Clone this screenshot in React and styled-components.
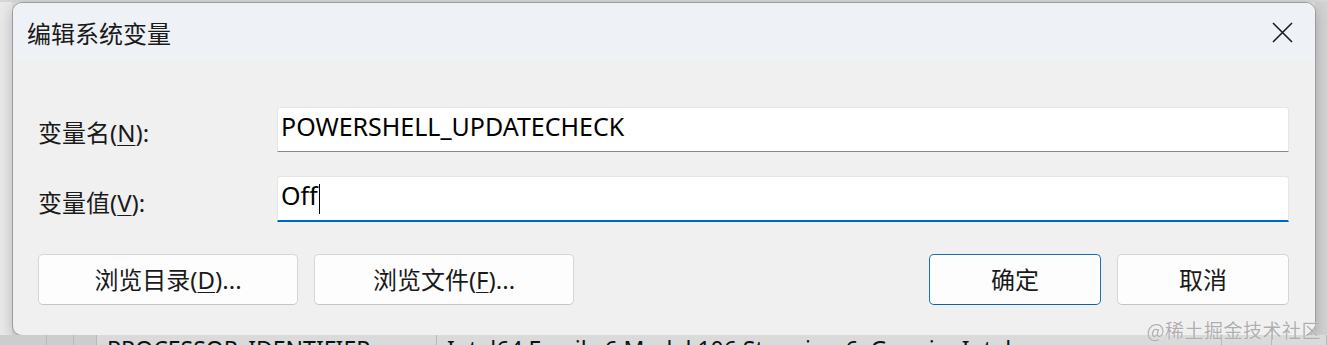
import styled, { createGlobalStyle, css } from 'styled-components';

const GlobalStyle = createGlobalStyle`
  html, body {
    margin: 0;
    padding: 0;
    background: #dcdcdc;
  }
  body {
    font-family: "Noto Sans", "Noto Sans CJK SC", sans-serif;
    color: #1a1a1a;
  }
`;

const Screen = styled.div`
  position: relative;
  width: 1327px;
  height: 345px;
  overflow: hidden;
  display: flex;
  flex-direction: column;
  background:
    linear-gradient(to right, #e9e9e9 0, #e9e9e9 12px, transparent 12px),
    linear-gradient(to left, #d2d2d2 0, #d2d2d2 12px, transparent 12px),
    #dedede;
`;

const TopStrip = styled.div`
  height: 2px;
  flex: none;
  background: #d6d6d6;
`;

const Middle = styled.div`
  flex: none;
  padding-left: 12px;
  display: flex;
`;

const Dialog = styled.section`
  width: 1304px;
  height: 334px;
  box-sizing: border-box;
  border: 1px solid #9c9c9c;
  border-radius: 10px;
  overflow: hidden;
  background: #f0f0f0;
  box-shadow: 0 4px 14px rgba(0, 0, 0, 0.22);
  display: flex;
  flex-direction: column;
`;

const TitleBar = styled.header`
  height: 58px;
  flex: none;
  display: flex;
  align-items: center;
  justify-content: space-between;
  padding: 0 22px 0 14px;
  background: linear-gradient(to bottom, #eef2f7, #eef1f5);
`;

const Title = styled.h1`
  margin: 0;
  font-size: 24px;
  font-weight: 400;
  color: #1a1a1a;
`;

const CloseButton = styled.button`
  border: 0;
  background: transparent;
  padding: 0;
  width: 22px;
  height: 22px;
  display: flex;
  align-items: center;
  justify-content: center;
  color: #1b1b1b;
`;

const Body = styled.div`
  flex: 1;
  padding: 46px 26px 0 25px;
  display: flex;
  flex-direction: column;
`;

const Fields = styled.div`
  display: grid;
  grid-template-columns: 239px 1fr;
  row-gap: 24px;
  align-items: center;
`;

const Label = styled.label`
  font-size: 24px;
  color: #1a1a1a;
  padding-top: 4px;

  u {
    text-decoration-thickness: 1px;
    text-underline-offset: 3px;
  }
`;

const TextBox = styled.div(
  ({ $focused }) => css`
    height: 45px;
    box-sizing: border-box;
    background: #ffffff;
    border: 1px solid #e6e6e6;
    border-bottom: 1px solid #878787;
    border-radius: 3px 3px 0 0;
    padding: 0 0 7px 3px;
    display: flex;
    align-items: center;
    font-size: 25px;
    color: #000;
    ${$focused &&
    css`
      height: 46px;
      border-bottom: 2px solid #0067c0;
    `}
  `
);

const Caret = styled.span`
  display: inline-block;
  width: 1px;
  height: 30px;
  margin-left: 1px;
  background: #000;
  align-self: center;
  margin-top: 7px;
`;

const ButtonRow = styled.div`
  margin-top: 32px;
  display: flex;
  align-items: center;
  gap: 16px;
`;

const Spacer = styled.div`
  flex: 1;
`;

const Button = styled.button(
  ({ $wide, $primary }) => css`
    width: ${$wide ? '260px' : '172px'};
    height: 51px;
    box-sizing: border-box;
    border-radius: 5px;
    background: #fdfdfd;
    border: 1px solid ${$primary ? '#1a6fb5' : '#d6d6d6'};
    border-bottom-color: ${$primary ? '#0e5ea3' : '#c4c4c4'};
    font-family: "Noto Sans", "Noto Sans CJK SC", sans-serif;
    font-size: 24px;
    color: #1a1a1a;
    padding: 0 0 2px;

    u {
      text-decoration-thickness: 1px;
      text-underline-offset: 3px;
    }
  `
);

const Backdrop = styled.div`
  flex: none;
  height: 20px;
  margin-top: -1px;
  display: grid;
  grid-template-columns: 47px 27px 23px 340px 785px 50px 1fr;
  background: #dadada;
`;

const Cell = styled.div(
  ({ $shade }) => css`
    border-right: 1px solid #b9b9b9;
    background: ${$shade ? '#cdcdcd' : 'transparent'};
    font-size: 23px;
    line-height: 1;
    padding: 3px 0 0 10px;
    white-space: nowrap;
    overflow: hidden;
    color: #111;
  `
);

const Watermark = styled.div`
  position: absolute;
  right: 6px;
  bottom: 2px;
  font-family: "Noto Sans CJK SC", sans-serif;
  font-size: 19px;
  color: rgba(160, 160, 160, 0.85);
  text-shadow: 0 0 1px #fff;
  letter-spacing: 0.5px;
`;

function CloseIcon() {
  return (
    <svg width="21" height="21" viewBox="0 0 21 21" fill="none">
      <path d="M1 1 L20 20 M20 1 L1 20" stroke="currentColor" strokeWidth="1.6" />
    </svg>
  );
}

export default function App() {
  return (
    <>
      <GlobalStyle />
      <Screen>
        <TopStrip />
        <Middle>
          <Dialog>
            <TitleBar>
              <Title>编辑系统变量</Title>
              <CloseButton aria-label="关闭">
                <CloseIcon />
              </CloseButton>
            </TitleBar>
            <Body>
              <Fields>
                <Label htmlFor="varName">变量名(<u>N</u>):</Label>
                <TextBox id="varName">POWERSHELL_UPDATECHECK</TextBox>
                <Label htmlFor="varValue">变量值(<u>V</u>):</Label>
                <TextBox id="varValue" $focused>
                  Off<Caret />
                </TextBox>
              </Fields>
              <ButtonRow>
                <Button $wide>浏览目录(<u>D</u>)...</Button>
                <Button $wide>浏览文件(<u>F</u>)...</Button>
                <Spacer />
                <Button $primary>确定</Button>
                <Button>取消</Button>
              </ButtonRow>
            </Body>
          </Dialog>
        </Middle>
        <Backdrop>
          <Cell $shade />
          <Cell $shade />
          <Cell $shade />
          <Cell>PROCESSOR_IDENTIFIER</Cell>
          <Cell>Intel64 Family 6 Model 106 Stepping 6, GenuineIntel</Cell>
          <Cell />
          <Cell />
        </Backdrop>
        <Watermark>@稀土掘金技术社区</Watermark>
      </Screen>
    </>
  );
}
